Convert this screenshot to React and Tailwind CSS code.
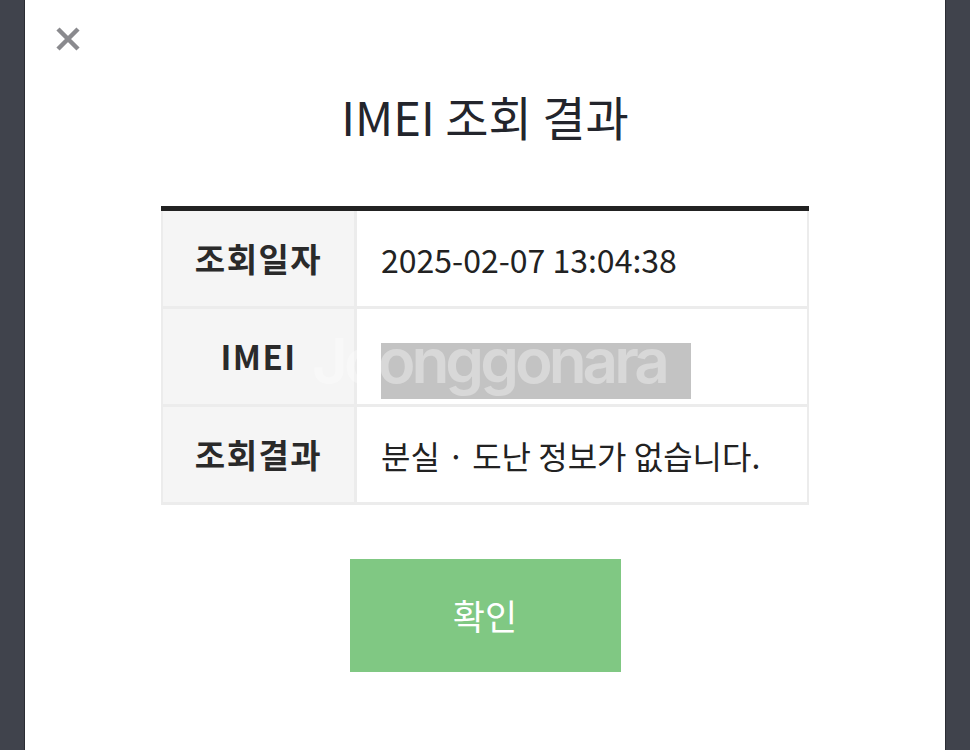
import React from "react";

const FONT = { fontFamily: '"Noto Sans CJK KR", "Noto Sans", sans-serif' };

const rows = [
  { label: "조회일자", value: "2025-02-07 13:04:38" },
  { label: "IMEI", value: null },
  { label: "조회결과", value: "분실 · 도난 정보가 없습니다." },
];

const App = () => {
  return (
    <div className="flex h-[750px] w-[970px] overflow-hidden bg-[#40434c]" style={FONT}>
      {/* modal */}
      <div className="relative ml-[24px] h-full w-[922px] border-x border-[#2b2d34] bg-white">
        <button className="absolute left-[30px] top-[26px] h-[26px] w-[26px]">
          <svg viewBox="0 0 26 26" className="h-full w-full">
            <path d="M3 3 L23 23 M23 3 L3 23" stroke="#8a8a8e" strokeWidth="4.5" strokeLinecap="butt" />
          </svg>
        </button>

        <h1 className="pt-[84px] text-center text-[47px] leading-[64px] font-normal text-[#23252c]">
          IMEI 조회 결과
        </h1>

        {/* result table */}
        <div className="mx-auto mt-[58px] w-[648px] border-t-[5px] border-[#222]">
          {rows.map((row) => (
            <div
              key={row.label}
              className="flex h-[98px] border-x-2 border-b-[3px] border-[#ececec]"
            >
              <div className="flex w-[194px] items-center justify-center border-r-[3px] border-[#ececec] bg-[#f5f5f5] text-[33px] font-bold tracking-[1.5px] text-[#2a2a2a]">
                {row.label}
              </div>
              <div className="relative flex flex-1 items-center pl-[24px] text-[32px] text-[#222]">
                {row.value ? (
                  row.value
                ) : (
                  <div className="mt-[28px] h-[56px] w-[310px] bg-[#c3c3c3]" />
                )}
              </div>
            </div>
          ))}
        </div>

        {/* watermark */}
        <div
          className="pointer-events-none absolute left-[287px] top-[316px] text-[62px] leading-[90px] font-semibold tracking-[-4px] text-white opacity-35"
          style={{ fontFamily: "Inter, Lato, sans-serif" }}
        >
          Joonggonara
        </div>

        <div className="mt-[54px] flex justify-center">
          <button className="h-[113px] w-[271px] bg-[#80c883] text-[35px] text-white">
            확인
          </button>
        </div>
      </div>
    </div>
  );
};

export default App;
